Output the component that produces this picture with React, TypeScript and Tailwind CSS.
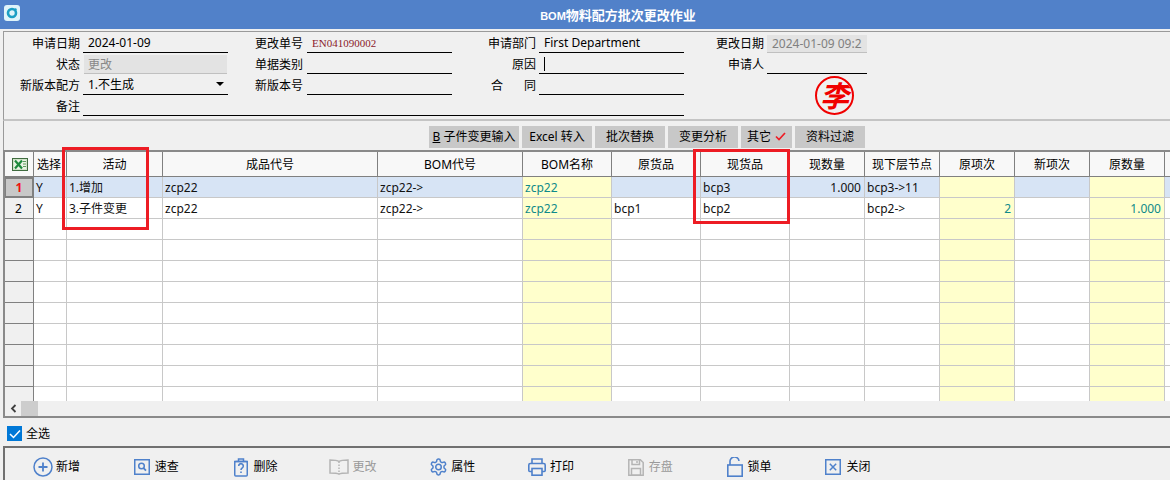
import React from "react";

const cols = "grid grid-cols-[30px_33px_96px_215px_145px_89px_89px_89px_75px_75px_75px_75px_75px_1fr]";

const headers = ["选择", "活动", "成品代号", "BOM代号", "BOM名称", "原货品", "现货品", "现数量", "现下层节点", "原项次", "新项次", "原数量"];
const yellow = [4, 9, 11];

type R = { values: string[] };
const rows: R[] = [
  { values: ["Y", "1.增加", "zcp22", "zcp22->", "zcp22", "", "bcp3", "1.000", "bcp3->11", "", "", ""] },
  { values: ["Y", "3.子件变更", "zcp22", "zcp22->", "zcp22", "bcp1", "bcp2", "", "bcp2->", "2", "", "1.000"] },
  ...Array.from({ length: 10 }, () => ({ values: Array(12).fill("") })),
];

function Label({ children, cls = "" }: { children: React.ReactNode; cls?: string }) {
  return <div className={`flex items-center justify-end pr-[3px] pt-[2px] h-[21px] whitespace-pre ${cls}`}>{children}</div>;
}

function Field({ children, cls = "" }: { children?: React.ReactNode; cls?: string }) {
  return <div className={`h-[21px] border-b border-black flex items-center pl-[5px] pt-[2px] overflow-hidden whitespace-nowrap ${cls}`}>{children}</div>;
}

function ExcelIcon() {
  return (
    <svg width="16" height="13" viewBox="0 0 16 13">
      <rect x="0.5" y="0.5" width="15" height="12" fill="#cfe3c8" stroke="#3f6b3f" />
      <rect x="2" y="2" width="12" height="9" fill="#e9f3e4" />
      <path d="M3 2.5 L10 10.5 M10 2.5 L3 10.5" stroke="#1e8a3c" strokeWidth="2.2" />
      <path d="M11 3.5h3 M11 6h3 M11 8.5h3" stroke="#5b9a5b" strokeWidth="1" />
    </svg>
  );
}

const blue = "#4f81cb";
const dis = "#b4b4b4";

function PlusIcon() {
  return (
    <svg width="20" height="20" viewBox="0 0 20 20" fill="none" stroke={blue} strokeWidth="1.5">
      <circle cx="10" cy="10" r="9" />
      <path d="M10 5.5v9M5.5 10h9" strokeWidth="1.8" />
    </svg>
  );
}
function SearchIcon() {
  return (
    <svg width="16" height="16" viewBox="0 0 16 16" fill="none" stroke={blue} strokeWidth="1.5">
      <rect x="0.75" y="0.75" width="14.5" height="14.5" />
      <circle cx="7.5" cy="7" r="2.8" />
      <path d="M9.6 9.2l2.4 2.4" strokeWidth="1.8" />
    </svg>
  );
}
function TrashIcon() {
  return (
    <svg width="16" height="19" viewBox="0 0 16 19" fill="none" stroke={blue} strokeWidth="1.5">
      <path d="M1 3.5h14M5.5 3.5V1h5v2.5" />
      <rect x="1.75" y="3.5" width="12.5" height="14.5" rx="1" />
      <path d="M5.7 8a2.3 2.3 0 1 1 3.6 1.9c-.9.6-1.3 1-1.3 2" strokeWidth="1.6" />
      <path d="M8 13.5v1.6" strokeWidth="1.6" />
    </svg>
  );
}
function BookIcon() {
  return (
    <svg width="20" height="16" viewBox="0 0 20 16" fill="none" stroke={dis} strokeWidth="1.5">
      <path d="M10 2.5C8 1 4 1 1 1v13c3 0 7 0 9 1.200C12 14 16 14 19 14V1c-3 0-7 0-9 1.500z" />
      <path d="M10 2.500v12.500" strokeDasharray="1.500 1.500" />
    </svg>
  );
}
function GearIcon() {
  return (
    <svg width="19" height="20" viewBox="0 0 24 24" fill="none" stroke={blue} strokeWidth="1.9" strokeLinejoin="round">
      <path d="M12.22 2h-.44a2 2 0 0 0-2 2v.18a2 2 0 0 1-1 1.730l-.43.250a2 2 0 0 1-2 0l-.15-.080a2 2 0 0 0-2.730.730l-.22.380a2 2 0 0 0 .730 2.730l.15.100a2 2 0 0 1 1 1.720v.510a2 2 0 0 1-1 1.740l-.15.090a2 2 0 0 0-.730 2.730l.22.380a2 2 0 0 0 2.730.730l.15-.080a2 2 0 0 1 2 0l.43.250a2 2 0 0 1 1 1.730V20a2 2 0 0 0 2 2h.44a2 2 0 0 0 2-2v-.18a2 2 0 0 1 1-1.730l.43-.250a2 2 0 0 1 2 0l.15.080a2 2 0 0 0 2.730-.730l.22-.390a2 2 0 0 0-.730-2.730l-.15-.080a2 2 0 0 1-1-1.740v-.500a2 2 0 0 1 1-1.740l.15-.090a2 2 0 0 0 .730-2.730l-.22-.380a2 2 0 0 0-2.730-.730l-.15.080a2 2 0 0 1-2 0l-.43-.250a2 2 0 0 1-1-1.730V4a2 2 0 0 0-2-2z" />
      <circle cx="12" cy="12" r="3.500" />
    </svg>
  );
}
function PrinterIcon() {
  return (
    <svg width="18" height="18" viewBox="0 0 18 18" fill="none" stroke={blue} strokeWidth="1.6">
      <path d="M4 5.500V1h10v4.500" />
      <path d="M4 13.500H1.800a1 1 0 0 1-1-1V7a1.500 1.500 0 0 1 1.500-1.500h13.400A1.500 1.500 0 0 1 17.200 7v5.500a1 1 0 0 1-1 1H14" />
      <rect x="4" y="10.500" width="10" height="6.700" />
    </svg>
  );
}
function SaveIcon() {
  return (
    <svg width="16" height="17" viewBox="0 0 16 17" fill="none" stroke={dis} strokeWidth="1.500">
      <path d="M.8.800h11.500L15.200 3.500v12.700H.8z" />
      <path d="M4 .800v4.700h7.500V.800M9 2v2" />
      <rect x="3.500" y="9.500" width="9" height="6.700" />
    </svg>
  );
}
function LockIcon() {
  return (
    <svg width="16" height="20" viewBox="0 0 16 20" fill="none" stroke={blue} strokeWidth="1.600">
      <rect x="0.800" y="8" width="14.400" height="11.200" />
      <path d="M3 8V5a4.500 4.500 0 0 1 9 -1" />
    </svg>
  );
}
function CloseIcon() {
  return (
    <svg width="16" height="16" viewBox="0 0 16 16" fill="none" stroke={blue} strokeWidth="1.500">
      <rect x="0.750" y="0.750" width="14.500" height="14.500" />
      <path d="M4.800 4.800l6.400 6.400M11.200 4.800l-6.400 6.400" />
    </svg>
  );
}

const tools: { icon: React.ReactNode; label: string; off?: boolean }[] = [
  { icon: <PlusIcon />, label: "新增" },
  { icon: <SearchIcon />, label: "速查" },
  { icon: <TrashIcon />, label: "删除" },
  { icon: <BookIcon />, label: "更改", off: true },
  { icon: <GearIcon />, label: "属性" },
  { icon: <PrinterIcon />, label: "打印" },
  { icon: <SaveIcon />, label: "存盘", off: true },
  { icon: <LockIcon />, label: "锁单" },
  { icon: <CloseIcon />, label: "关闭" },
];

const buttons: { label: React.ReactNode; w: string }[] = [
  { label: <><span className="underline">B</span> 子件变更输入</>, w: "w-[90px]" },
  { label: "Excel 转入", w: "w-[70px]" },
  { label: "批次替换", w: "w-[70px]" },
  { label: "变更分析", w: "w-[70px]" },
  {
    label: (
      <span className="flex items-center gap-[4px]">
        其它
        <svg width="11" height="9" viewBox="0 0 11 9" fill="none" stroke="#ee1c25" strokeWidth="1.700">
          <path d="M1 4.500l3 3 6-6.500" />
        </svg>
      </span>
    ),
    w: "w-[51px]",
  },
  { label: "资料过滤", w: "w-[70px]" },
];

function cellClass(c: number, r: number, v: string) {
  const isYellow = yellow.includes(c);
  const bg = isYellow ? "bg-[#ffffcc]" : r === 0 ? "bg-[#d7e4f5]" : "bg-white";
  const right = c === 7 || c === 9 || c === 11;
  const color = isYellow && v ? "text-[#0e8a8a]" : "text-[#111111]";
  return `${bg} ${color} ${right ? "text-right pr-[3px]" : "pl-[2px]"} border-r border-b border-[#c8c8c8] h-[21px] leading-[22px] overflow-hidden whitespace-nowrap`;
}

export default function App() {
  return (
    <div className="relative w-[1170px] h-[480px] overflow-hidden flex flex-col bg-[#f0f0f0] text-[12px] text-black font-['Noto_Sans','Noto_Sans_CJK_SC',sans-serif]">
      {/* title bar */}
      <div className="h-[29px] shrink-0 bg-[#5181c9] flex items-center">
        <div className="ml-[4px] mb-[3px] w-[16px] h-[16px] rounded-[3px] bg-[#dff4fa] flex items-center justify-center">
          <svg width="12" height="12" viewBox="0 0 12 12" fill="none">
            <circle cx="6" cy="6" r="4" stroke="#1b9fc4" strokeWidth="2.600" />
            <circle cx="9.500" cy="2.500" r="1.200" fill="#1b9fc4" />
          </svg>
        </div>
        <div className="flex-1 pl-[46px] text-center text-white font-bold text-[13px] font-['Noto_Sans_CJK_SC',sans-serif]">
          <span className="text-[11px] font-['Liberation_Sans',sans-serif]">BOM</span>物料配方批次更改作业
        </div>
      </div>

      {/* form */}
      <div className="h-[2px] shrink-0 bg-[#f0f0f0]" />
      <div className="ml-[3px] h-[90px] shrink-0 border-l border-t border-[#9a9a9a] border-b-2 border-b-[#c4c4c4]">
        <div className="grid grid-cols-[79px_145px_79px_145px_87px_145px_83px_100px]">
          <Label>申请日期</Label>
          <Field>2024-01-09</Field>
          <Label cls="pr-[4px]">更改单号</Label>
          <Field cls="text-[#8b1a2b] text-[11px] font-['Liberation_Serif',serif]">EN041090002</Field>
          <Label>申请部门</Label>
          <Field>First Department</Field>
          <Label>更改日期</Label>
          <div className="h-[21px] flex items-end">
            <div className="w-full h-[18px] bg-[#e3e3e3] border-b border-[#c0c0c0] text-[#808080] pl-[5px] leading-[17px] overflow-hidden whitespace-nowrap">2024-01-09 09:2</div>
          </div>

          <Label>状态</Label>
          <div className="h-[21px] flex items-end">
            <div className="w-full h-[19px] pl-[4px] ml-[1px] mr-[1px] bg-[#e3e3e3] border-b border-[#c0c0c0] text-[#888888] leading-[19px]">更改</div>
          </div>
          <Label cls="pr-[4px]">单据类别</Label>
          <Field />
          <Label>原因</Label>
          <Field>
            <div className="w-px h-[14px] bg-black" />
          </Field>
          <Label>申请人</Label>
          <Field />

          <Label>新版本配方</Label>
          <Field cls="relative">
            1.不生成
            <span className="absolute right-[4px] top-[8px] w-0 h-0 border-x-[4px] border-x-transparent border-t-[4px] border-t-black" />
          </Field>
          <Label cls="pr-[4px]">新版本号</Label>
          <Field />
          <Label>
            <span className="mr-[21px]">合</span>同
          </Label>
          <Field />
          <div className="col-start-8 row-start-3 row-span-2 justify-self-start self-center ml-[48px] mt-[1px] w-[39px] h-[39px] rounded-full border-2 border-[#f00000] flex items-center justify-center overflow-hidden text-[#f00000] text-[29px] leading-none font-bold italic">
            李
          </div>

          <Label cls="col-start-1 row-start-4">备注</Label>
          <div className="col-start-2 col-span-5 row-start-4 h-[21px] border-b border-black" />
        </div>
      </div>

      {/* action buttons */}
      <div className="h-[29px] shrink-0 ml-[3px] border-l border-[#9a9a9a] flex items-center pl-[425px] gap-[3px] pt-[2px]">
        {buttons.map((b, i) => (
          <div key={i} className={`${b.w} h-[22px] bg-[#c8c8c8] flex items-center justify-center whitespace-pre`}>
            {b.label}
          </div>
        ))}
      </div>

      {/* grid */}
      <div className="ml-[3px] h-[268px] shrink-0 border-l-2 border-t-2 border-b-2 border-[#8a8a8a] flex flex-col overflow-hidden">
        <div className="h-[249px] shrink-0 overflow-hidden bg-white">
          <div className={`${cols} h-[25px] bg-[#f8f8f8] border-b border-[#808080] -ml-px`}>
            <div className="border-r border-[#808080] flex items-center justify-center pl-[2px]">
              <ExcelIcon />
            </div>
            {headers.map((h, i) => (
              <div key={i} className={`border-r border-[#808080] flex items-center pt-[2px] whitespace-nowrap overflow-hidden ${i === 0 ? "pl-[3px]" : "justify-center"}`}>
                {h}
              </div>
            ))}
            <div />
          </div>
          {rows.map((row, r) => (
            <div key={r} className={`${cols} h-[21px] -ml-px`}>
              {r === 0 ? (
                <div className="h-[21px] bg-[#c8c8c8] border-2 border-[#808080] text-[#ee1111] font-bold text-center leading-[17px]">1</div>
              ) : (
                <div className="h-[21px] bg-[#f0f0f0] border-r border-b border-[#808080] text-center leading-[22px]">{r === 1 ? "2" : ""}</div>
              )}
              {row.values.map((v, c) => (
                <div key={c} className={cellClass(c, r, v)}>
                  {v}
                </div>
              ))}
              <div className={`h-[21px] border-b border-[#c8c8c8] ${r === 0 ? "bg-[#d7e4f5]" : "bg-white"}`} />
            </div>
          ))}
        </div>
        <div className="flex-1 flex items-stretch bg-[#f0f0f0]">
          <div className="w-[16px] flex items-center justify-center">
            <svg width="7" height="9" viewBox="0 0 7 9" fill="none" stroke="#404040" strokeWidth="1.800">
              <path d="M5.500 1L2 4.500l3.500 3.500" />
            </svg>
          </div>
          <div className="w-[17px] bg-[#cdcdcd]" />
        </div>
      </div>

      {/* select all */}
      <div className="h-[28px] shrink-0 flex items-center pl-[7px] pt-[3px] gap-[4px]">
        <div className="w-[15px] h-[15px] bg-[#0078d7] flex items-center justify-center">
          <svg width="12" height="10" viewBox="0 0 12 10" fill="none" stroke="white" strokeWidth="1.500">
            <path d="M1 5l3.500 3.500L11 1.500" />
          </svg>
        </div>
        <span>全选</span>
      </div>

      {/* bottom toolbar */}
      <div className="ml-[3px] flex-1 border-l-2 border-t-2 border-[#707070] flex items-center pl-[28px] pt-[6px]">
        {tools.map((t, i) => (
          <div key={i} className={`w-[98.800px] shrink-0 flex items-center gap-[3px] ${t.off ? "text-[#9a9a9a]" : "text-black"}`}>
            <span className="w-[20px] flex items-center justify-center">{t.icon}</span>
            <span>{t.label}</span>
          </div>
        ))}
      </div>

      {/* red annotation boxes */}
      <div className="absolute left-[62px] top-[147px] w-[87px] h-[83px] border-[3px] border-[#ed1c24]" />
      <div className="absolute left-[693px] top-[149px] w-[97px] h-[75px] border-[3px] border-[#ed1c24]" />
    </div>
  );
}
